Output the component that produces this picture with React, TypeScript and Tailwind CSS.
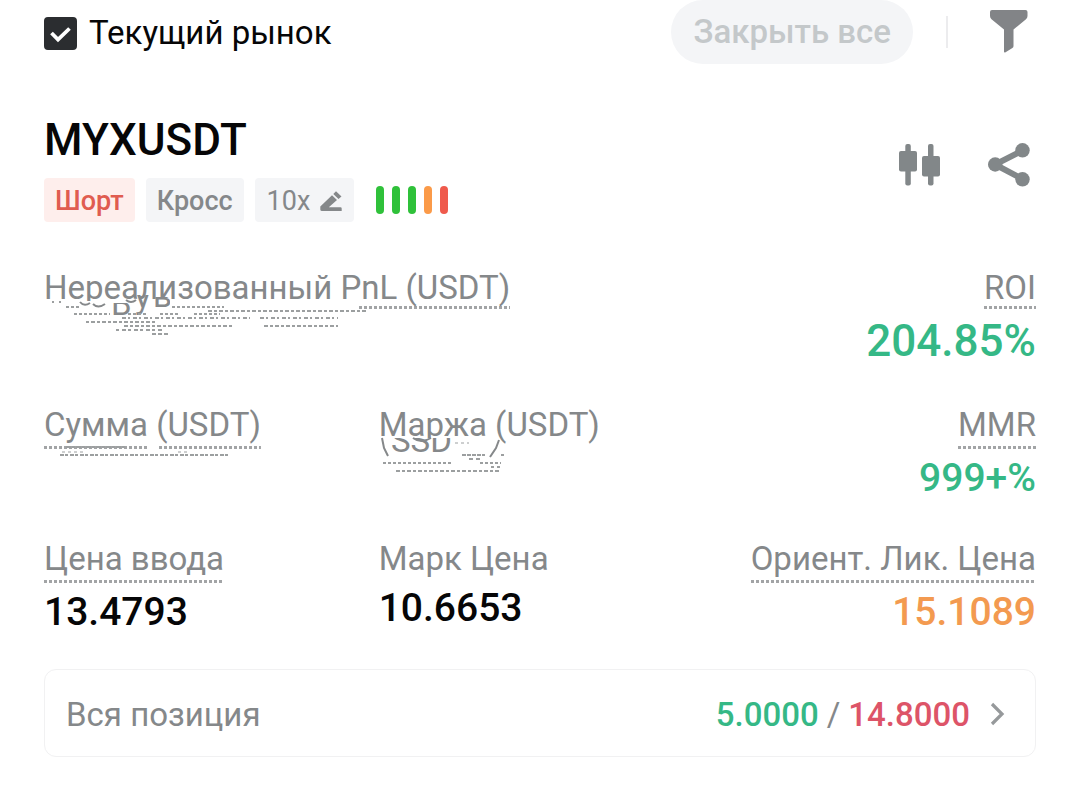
import type { ReactNode } from 'react';
import { useState } from 'react';

type StatProps = {
  label: string;
  value?: string;
  valueClass?: string;
  underline?: 'none' | 'near' | 'far';
  right?: boolean;
  children?: ReactNode;
};

const dots =
  'bg-[repeating-linear-gradient(90deg,#a2a4a6_0_3px,transparent_3px_5px)] bg-[length:100%_3px] bg-bottom bg-no-repeat';

const labelStyles = { none: '', near: `pb-[3px] ${dots}`, far: `pb-1.5 ${dots}` };
const valueStyles = { none: 'mt-[5px]', near: 'mt-1.5', far: 'mt-[3px]' };

const healthBars = ['bg-[#2fc13a]', 'bg-[#2fc13a]', 'bg-[#2fc13a]', 'bg-[#fb9a48]', 'bg-[#ef5a4c]'];

function Stat({ label, value, valueClass = '', underline = 'far', right = false, children }: StatProps) {
  return (
    <div className={`flex flex-col ${right ? 'items-end' : 'items-start'}`}>
      <dt className={`relative whitespace-nowrap text-[33px] leading-[37px] text-[#85888a] ${labelStyles[underline]}`}>
        {label}
        {children}
      </dt>
      {value && (
        <dd className={`font-medium leading-[52px] ${valueStyles[underline]} ${valueClass}`}>{value}</dd>
      )}
    </div>
  );
}

function PnlSmudge() {
  return (
    <svg className="absolute left-0 top-0" width="330" height="72" fill="none" aria-hidden="true">
      <path d="M0 32H128V42H0ZM128 36H313V42H128Z" fill="#fff" />
      <clipPath id="pnl-cut">
        <path d="M66 34H90V48H66ZM90 26H108V48H90ZM108 28H126V39H108Z" />
      </clipPath>
      <g clipPath="url(#pnl-cut)" fill="#85888a" fontSize="33">
        <text x="67" y="46">В</text>
        <text x="91" y="39">у</text>
        <text x="109" y="38">в</text>
      </g>
      <path d="M36 33Q40 38 46 34M49 35Q54 40 61 35M82 31Q87 35 92 31" stroke="#85888a" strokeWidth="2" />
      <g stroke="#9c9fa0" strokeWidth="2">
        <path d="M8 33H22" strokeDasharray="2 5" />
        <path d="M22 38H36" strokeDasharray="3 2" />
        <path d="M128 38H180" strokeDasharray="3 2" />
        <path d="M164 42H322" strokeDasharray="4 2 3 2" />
        <path d="M30 45H66M84 45H104M116 45H136M150 45H176" strokeDasharray="3 2" />
        <path d="M78 49H206M216 49H294" strokeDasharray="4 2 2 3" />
        <path d="M42 53H112" strokeDasharray="3 2 4 2" />
        <path d="M80 57H190M220 57H294" strokeDasharray="4 2 3 2" />
        <path d="M72 61H120" strokeDasharray="3 3 4 2" />
        <path d="M108 65H124" strokeDasharray="4 2" />
      </g>
    </svg>
  );
}

function AmountSmudge() {
  return (
    <svg className="absolute left-0 top-0" width="200" height="56" fill="none" aria-hidden="true">
      <path d="M103 39H115V44H103Z" fill="#fff" />
      <g stroke="#9c9fa0" strokeWidth="2">
        <path d="M22 41H82" strokeDasharray="5 1 3 1" />
        <path d="M18 46H40M134 46H144" strokeDasharray="3 3" strokeWidth="1" />
        <path d="M16 49H184" strokeDasharray="4 1 3 2" />
      </g>
    </svg>
  );
}

function MarginSmudge() {
  return (
    <svg className="absolute left-0 top-0" width="130" height="70" fill="none" aria-hidden="true">
      <path d="M0 32H108V70H0Z" fill="#fff" />
      <clipPath id="margin-cut">
        <path d="M12 32H74V50H12Z" />
      </clipPath>
      <text x="12" y="46" clipPath="url(#margin-cut)" fill="#85888a" fontSize="33">
        SSD
      </text>
      <path d="M3 32L5 42 9 50M120 34L117 42 111 51" stroke="#85888a" strokeWidth="2" />
      <path d="M34 32Q42 38 52 32" stroke="#85888a" strokeWidth="2" />
      <g stroke="#9c9fa0" strokeWidth="2">
        <path d="M76 37H90" strokeDasharray="3 3" strokeWidth="1" />
        <path d="M83 49H106M122 49H125" strokeDasharray="4 1" />
        <path d="M90 53H102" strokeDasharray="4 3" />
        <path d="M4 57H72M101 57H122" strokeDasharray="3 2" />
        <path d="M112 61H122" strokeDasharray="3 3" />
        <path d="M17 65H122" strokeDasharray="4 2 3 2" />
      </g>
    </svg>
  );
}

export default function App() {
  const [currentOnly, setCurrentOnly] = useState(true);

  return (
    <main className="min-h-screen bg-white px-11 pb-11 font-['Roboto','Noto_Sans',sans-serif] text-[#060607]">
      {/* Toolbar */}
      <header className="flex h-16 items-center justify-between">
        <label className="flex items-center gap-3 pt-0.5 text-[33px] leading-10">
          <span className="relative block size-[33px]">
            <input
              type="checkbox"
              checked={currentOnly}
              onChange={(e) => setCurrentOnly(e.target.checked)}
              className="block size-[33px] appearance-none rounded border-2 border-[#2b2d30] checked:bg-[#2b2d30]"
            />
            {currentOnly && (
              <svg className="pointer-events-none absolute inset-0" viewBox="0 0 33 33" fill="none">
                <path d="M7.5 16L14 22.5 25.5 11.5" stroke="#fff" strokeWidth="3.8" />
              </svg>
            )}
          </span>
          Текущий рынок
        </label>
        <div className="flex items-center">
          <button
            type="button"
            disabled
            className="h-16 rounded-full bg-[#f4f5f7] px-[22px] text-[33px] font-medium text-[#c4c8ca]"
          >
            Закрыть все
          </button>
          <span className="ml-[33px] h-8 w-0.5 bg-[#ececee]" />
          <button type="button" aria-label="Фильтр" className="mb-0.5 ml-[42px] mr-2">
            <svg width="38" height="43" viewBox="0 0 38 43" fill="#828487">
              <path d="M2 0H35.5Q37.500 0 37.500 2V6Q37.500 8 36 9.200L23.500 19.500V36Q23.500 37.300 22.400 38L15.600 42.300Q14 43 14 41.500V19.500L1.500 9.200Q0 8 0 6V2Q0 0 2 0Z" />
            </svg>
          </button>
        </div>
      </header>

      {/* Position title */}
      <section className="mt-[52px] flex items-start justify-between">
        <div>
          <h1 className="text-[44px] font-medium leading-[48px]">MYXUSDT</h1>
          <div className="mt-3.5 flex items-center gap-[11px] text-[27px]">
            <span className="flex h-11 items-center rounded bg-[#feeeec] px-[11px] pt-0.5 font-medium text-[#e05c50]">
              Шорт
            </span>
            <span className="flex h-11 items-center rounded bg-[#f4f5f7] px-[11px] pt-0.5 font-medium text-[#85888a]">
              Кросс
            </span>
            <button
              type="button"
              className="flex h-11 items-center gap-2.5 rounded bg-[#f4f5f7] px-3 pt-0.5 text-[#85888a]"
            >
              10x
              <svg width="22" height="20" viewBox="0 0 22 20" fill="#85888a">
                <path d="M.3 18.500V15.500L12 4.200 17 9 8.800 16.300H20.500Q21.700 16.300 21.700 17.500V20H2Q.3 20 .3 18.500ZM13.300 2.900L16 .2 21.500 5.500 18.500 8Z" />
              </svg>
            </button>
            <span className="ml-[11px] flex gap-2">
              {healthBars.map((color, i) => (
                <span key={i} className={`h-7 w-2 rounded-full ${color}`} />
              ))}
            </span>
          </div>
        </div>
        <div className="mr-1.5 mt-[27px] flex gap-12">
          <button type="button" aria-label="График">
            <svg width="41" height="42" viewBox="0 0 41 42" fill="#828789">
              <rect x="6.300" width="5.500" height="41.500" rx="2" />
              <rect y="7" width="18" height="20.500" rx="2" />
              <rect x="29" width="5.500" height="41.500" rx="2" />
              <rect x="23" y="12" width="18" height="20.500" rx="2" />
            </svg>
          </button>
          <button type="button" aria-label="Поделиться">
            <svg width="42" height="44" viewBox="0 0 42 44" fill="#828789">
              <path d="M34.500 7.500L7 21.500 34.500 36" fill="none" stroke="#828789" strokeWidth="6" />
              <circle cx="34.500" cy="7.300" r="7.200" />
              <circle cx="7.200" cy="21.500" r="7.200" />
              <circle cx="34.500" cy="36.300" r="7.200" />
            </svg>
          </button>
        </div>
      </section>

      {/* Figures */}
      <dl className="mt-[47px] flex justify-between">
        <Stat label="Нереализованный PnL (USDT)" underline="near">
          <PnlSmudge />
        </Stat>
        <Stat label="ROI" value="204.85%" valueClass="text-[44px] text-[#35b886]" underline="near" right />
      </dl>
      <dl className="mt-[39px] grid grid-cols-3 gap-3">
        <Stat label="Сумма (USDT)">
          <AmountSmudge />
        </Stat>
        <Stat label="Маржа (USDT)" underline="none">
          <MarginSmudge />
        </Stat>
        <Stat label="MMR" value="999+%" valueClass="text-[39px] text-[#35b886]" right />
      </dl>
      <dl className="mt-9 grid grid-cols-3 gap-3">
        <Stat label="Цена ввода" value="13.4793" valueClass="text-[39px]" />
        <Stat label="Марк Цена" value="10.6653" valueClass="text-[39px]" underline="none" />
        <Stat label="Ориент. Лик. Цена" value="15.1089" valueClass="text-[39px] text-[#f39a50]" right />
      </dl>

      {/* TP / SL */}
      <button
        type="button"
        className="mt-[31px] flex h-[88px] w-full items-center justify-between rounded-xl border border-[#f1f1f2] pl-[21px] pr-[30px] pt-1 text-[33px] text-[#85888a]"
      >
        <span>Вся позиция</span>
        <span className="flex items-center gap-2 font-medium">
          <span className="text-[#35b886]">5.0000</span>
          <span className="font-normal">/</span>
          <span className="text-[#dd5468]">14.8000</span>
          <svg className="mb-0.5 ml-3" width="15" height="24" viewBox="0 0 15 24" fill="none">
            <path d="M2 2L12 12 2 22" stroke="#96999b" strokeWidth="3.200" />
          </svg>
        </span>
      </button>
    </main>
  );
}
